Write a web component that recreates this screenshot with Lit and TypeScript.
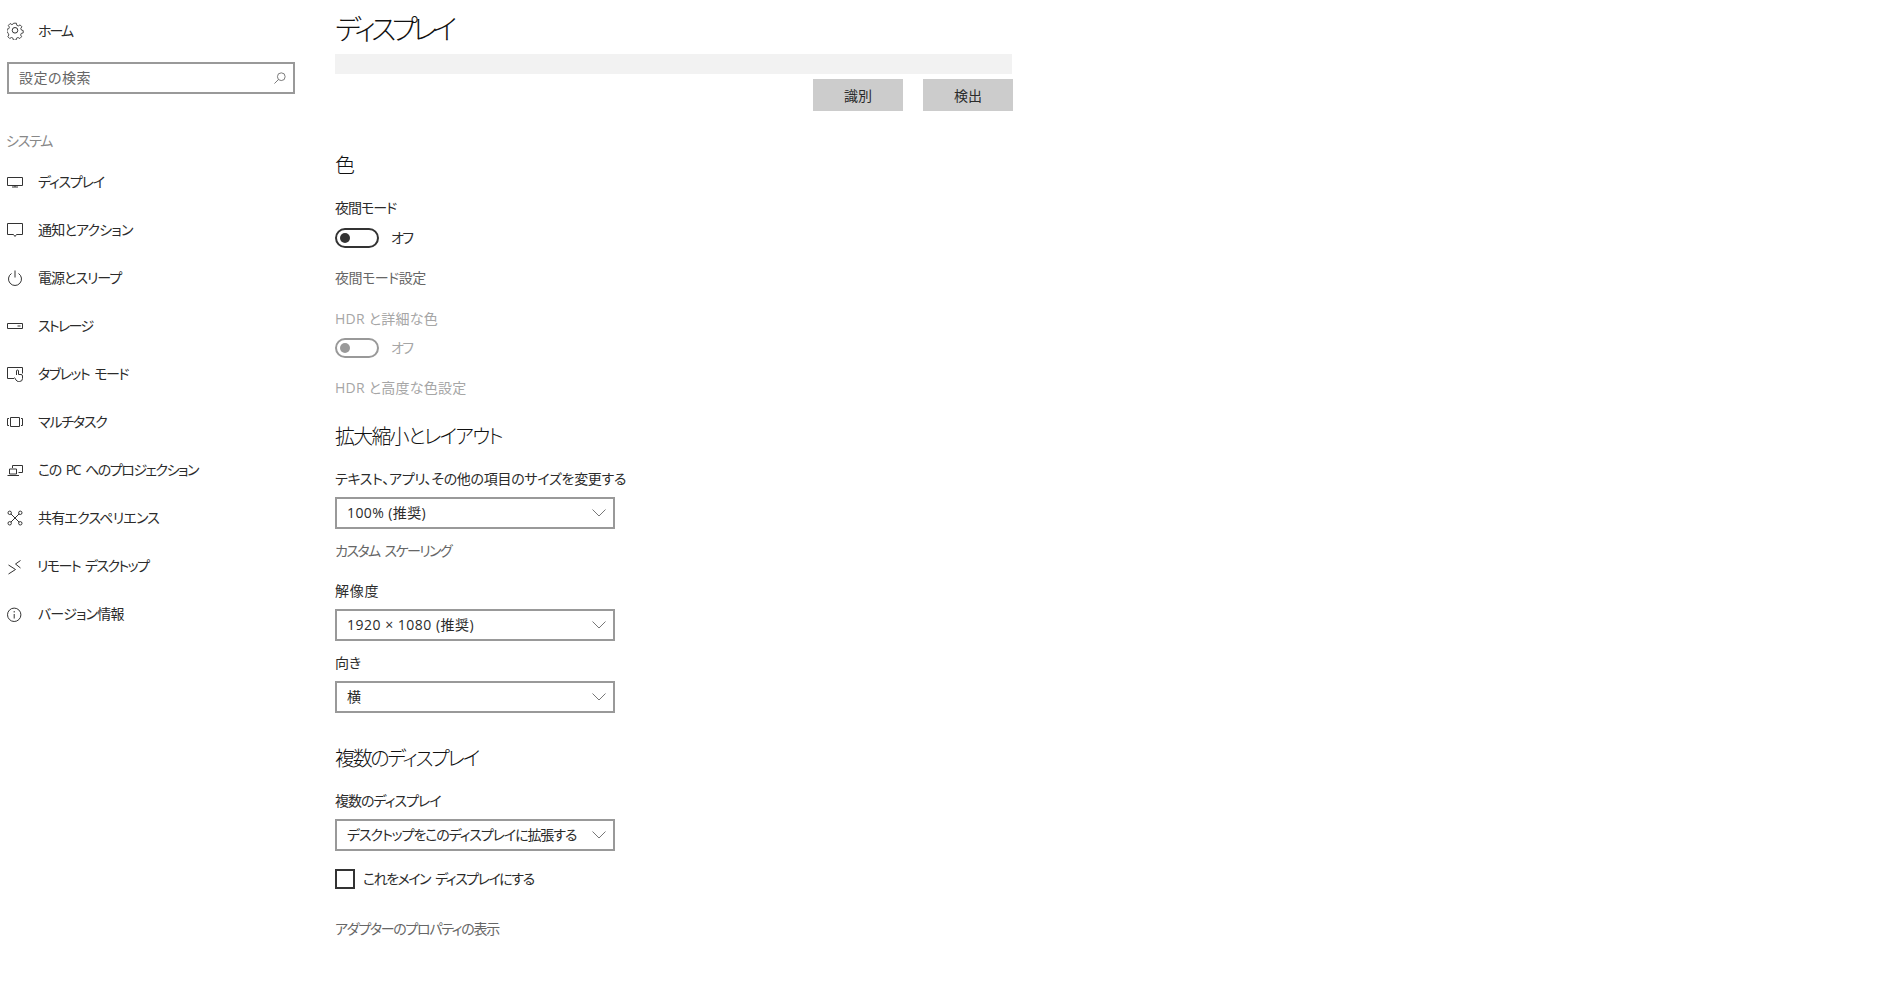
import { LitElement, html, css, svg } from "lit";
import { customElement } from "lit/decorators.js";

const ICONS: Record<string, unknown> = {
  display: svg`<path d="M.5 4.500h15v8h-15zM8 12.500v1.500M5 14h6"/>`,
  notify: svg`<path d="M.5 2.500h15v11h-6l-1.500 2-1.500-2h-6z"/>`,
  power: svg`<path d="M8 1.500v7M4.500 4.500a6.500 6.500 0 1 0 7 0"/>`,
  storage: svg`<path d="M.5 6.500h15v5h-15zM10.500 9h3"/>`,
  tablet: svg`<path d="M7 13.500H.5v-11h15v6M9.500 10V6a1 1 0 0 1 2 0v3.500H14a1.500 1.500 0 0 1 1.500 1.500v2.500a3 3 0 0 1-3 3h-1a3 3 0 0 1-2.500-1.500l-1.500-2.500"/>`,
  multi: svg`<path d="M3.500 4.500h9v9h-9zM2 5.500H.5v7H2M14 5.500h1.500v7H14"/>`,
  project: svg`<path d="M5.500 7V4.500h10v7h-4M2.500 8h7v5h-7zM.5 14.500H12"/>`,
  share: svg`<circle cx="2.700" cy="3.800" r="1.700"/><circle cx="13.300" cy="3.800" r="1.700"/><circle cx="2.700" cy="14.300" r="1.700"/><circle cx="13.300" cy="14.300" r="1.700"/><path d="M4 5l8 8M12 5l-8 8"/>`,
  remote: svg`<path d="M1.500 8l7 4.500-7 4.500M13.500 3.500l-5 3.500 5 4"/>`,
  info: svg`<circle cx="7.200" cy="9.800" r="6.700"/><path d="M7.200 9v4.500M7.200 6v1.500"/>`,
};

const ITEMS = [
  ["display", "ディスプレイ", "t-12"],
  ["notify", "通知とアクション", "t-08"],
  ["power", "電源とスリープ", "t-10"],
  ["storage", "ストレージ", "t-17"],
  ["tablet", "タブレット モード", "t-15 sp"],
  ["multi", "マルチタスク", "t-12"],
  ["project", "この PC へのプロジェクション", "t-15 sp"],
  ["share", "共有エクスペリエンス", "t-08"],
  ["remote", "リモート デスクトップ", "t-16 sp back"],
  ["info", "バージョン情報", "t-08"],
];

@customElement("app-root")
export class AppRoot extends LitElement {
  static styles = css`
    :host {
      display: flex;
      width: 1890px;
      height: 993px;
      overflow: hidden;
      background: #fff;
      color: #2b2b2b;
      font-family: "Open Sans", "Noto Sans CJK JP", sans-serif;
      font-size: 14px;
      font-feature-settings: "palt";
    }
    aside {
      width: 335px;
      flex: none;
      display: flex;
      flex-direction: column;
      padding: 7px 0 0 7px;
      box-sizing: border-box;
    }
    .nav {
      display: flex;
      align-items: center;
      gap: 13px;
      height: 48px;
      white-space: nowrap;
    }
    .nav span { margin-bottom: 2px; }
    .nav svg {
      width: 18px;
      height: 18px;
      flex: none;
      fill: none;
      stroke: #333;
      stroke-width: 1;
    }
    .search {
      width: 288px;
      height: 32px;
      margin-top: 7px;
      box-sizing: border-box;
      border: 2px solid #999;
      display: flex;
      align-items: center;
      justify-content: space-between;
      padding: 0 7px 0 10px;
      color: #666;
    }
    .search span { margin-bottom: 2px; }
    .search svg {
      width: 12px;
      height: 12px;
      fill: none;
      stroke: #666;
    }
    .group {
      height: 20px;
      line-height: 20px;
      margin: 37px 0 7px -1px;
      color: #888;
    }
    main {
      flex: 1;
      display: flex;
      flex-direction: column;
      align-items: flex-start;
      padding-top: 9px;
    }
    h1 {
      margin: 0;
      font-size: 28px;
      font-weight: 300;
      line-height: 40px;
      color: #111;
    }
    h2 {
      margin: 0;
      height: 28px;
      font-size: 20px;
      font-weight: 300;
      line-height: 26px;
      color: #111;
    }
    .bar {
      width: 677px;
      height: 20px;
      margin-top: 5px;
      background: #f2f2f2;
    }
    .buttons {
      width: 678px;
      display: flex;
      justify-content: flex-end;
      gap: 20px;
      margin-top: 5px;
    }
    .btn {
      width: 90px;
      height: 32px;
      background: #ccc;
      display: flex;
      align-items: center;
      justify-content: center;
    }
    .row {
      height: 20px;
      line-height: 18px;
      white-space: nowrap;
    }
    .link { color: #666; }
    .off { color: #a6a6a6; }
    .toggle-row {
      display: flex;
      align-items: center;
      gap: 12px;
      height: 20px;
    }
    .toggle-row span:last-child { margin-bottom: 2px; }
    .toggle {
      width: 44px;
      height: 20px;
      box-sizing: border-box;
      border: 2px solid #333;
      border-radius: 10px;
      display: flex;
      align-items: center;
      padding-left: 3px;
    }
    .toggle::before {
      content: "";
      width: 10px;
      height: 10px;
      border-radius: 50%;
      background: #333;
    }
    .toggle-row.off .toggle { border-color: #999; }
    .toggle-row.off .toggle::before { background: #999; }
    .select {
      width: 280px;
      height: 32px;
      box-sizing: border-box;
      border: 2px solid #999;
      display: flex;
      align-items: center;
      justify-content: space-between;
      padding: 0 7px 0 10px;
      white-space: nowrap;
    }
    .select span { margin-bottom: 2px; }
    .select svg {
      width: 14px;
      height: 8px;
      flex: none;
      fill: none;
      stroke: #777;
    }
    .check-row {
      display: flex;
      align-items: center;
      gap: 8px;
      height: 20px;
    }
    .check-row span:last-child { margin-bottom: 2px; }
    .box {
      width: 20px;
      height: 20px;
      box-sizing: border-box;
      border: 2px solid #333;
    }
    .m7 { margin-top: 7px; }
    .m8 { margin-top: 8px; }
    .m9 { margin-top: 9px; }
    .m13 { margin-top: 13px; }
    .m18 { margin-top: 18px; }
    .m20 { margin-top: 20px; }
    .m21 { margin-top: 21px; }
    .m25 { margin-top: 25px; }
    .m31 { margin-top: 31px; }
    .m33 { margin-top: 33px; }
    .m42 { margin-top: 42px; }
    .sp { word-spacing: 3px; }
    .back { margin-left: -1px; }
    .t-48 { letter-spacing: -4.8px; }
    .t-23 { letter-spacing: -2.3px; }
    .t-20 { letter-spacing: -2px; }
    .t-18 { letter-spacing: -1.8px; }
    .t-17 { letter-spacing: -1.7px; }
    .t-16 { letter-spacing: -1.6px; }
    .t-15 { letter-spacing: -1.5px; }
    .t-13 { letter-spacing: -1.3px; }
    .t-12 { letter-spacing: -1.2px; }
    .t-11 { letter-spacing: -1.1px; }
    .t-10 { letter-spacing: -1px; }
    .t-08 { letter-spacing: -0.8px; }
    .t-05 { letter-spacing: -0.5px; }
    .t-03 { letter-spacing: -0.3px; }
    .t02 { letter-spacing: 0.25px; }
    .t04 { letter-spacing: 0.4px; }
    .t05 { letter-spacing: 0.5px; }
    .t08 { letter-spacing: 0.8px; }
  `;

  private select(label: string, track = "") {
    return html`<div class="select m7">
      <span class=${track}>${label}</span>
      <svg viewBox="0 0 14 8"><path d="M.5 .5L7 7 13.500 .5" /></svg>
    </div>`;
  }

  render() {
    return html`
      <aside>
        <div class="nav">
          <svg viewBox="0 0 18 18">
            <circle cx="8" cy="8.300" r="2.800" />
            <path d="M7.500 1h3l.5 2.300 1.700.8 2-1.200 2 2.100-1.200 2 .7 1.700 2 .6v2.600l-2.200.6-.7 1.700 1.100 2-2 2-2-1.100-1.700.7-.5 2.200h-3l-.5-2.200-1.700-.7-2 1.100-2-2 1.100-2-.7-1.700L0 10.400V7.800l2-.6.700-1.700L1.500 3.500l2-2.100 2 1.200 1.500-.8z" transform="translate(0 .3) scale(.89)" />
          </svg>
          <span class="t-20">ホーム</span>
        </div>
        <div class="search">
          <span class="t05">設定の検索</span>
          <svg viewBox="0 0 14 14"><circle cx="8.500" cy="5.500" r="4.500" /><path d="M5.200 8.800L.5 13.500" /></svg>
        </div>
        <div class="group t-12">システム</div>
        ${ITEMS.map(
          ([icon, label, track]) => html`<div class="nav">
            <svg viewBox="0 0 18 18">${ICONS[icon]}</svg>
            <span class=${track}>${label}</span>
          </div>`
        )}
      </aside>
      <main>
        <h1 class="t-48">ディスプレイ</h1>
        <div class="bar"></div>
        <div class="buttons">
          <div class="btn">識別</div>
          <div class="btn">検出</div>
        </div>
        <h2 class="m42">色</h2>
        <div class="row m18 t-10">夜間モード</div>
        <div class="toggle-row m9"><span class="toggle"></span><span class="t-15">オフ</span></div>
        <div class="row link m21 t-05">夜間モード設定</div>
        <div class="row off m21 t02">HDR と詳細な色</div>
        <div class="toggle-row off m8"><span class="toggle"></span><span class="t-15">オフ</span></div>
        <div class="row off m21 t02">HDR と高度な色設定</div>
        <h2 class="m25 t-18">拡大縮小とレイアウト</h2>
        <div class="row m18 t-03">テキスト、アプリ、その他の項目のサイズを変更する</div>
        ${this.select("100% (推奨)", "t04")}
        <div class="row link m13 t-16 sp">カスタム スケーリング</div>
        <div class="row m20 t08">解像度</div>
        ${this.select("1920 × 1080 (推奨)", "t05")}
        <div class="row m13">向き</div>
        ${this.select("横")}
        <h2 class="m33 t-23">複数のディスプレイ</h2>
        <div class="row m18 t-10">複数のディスプレイ</div>
        ${this.select("デスクトップをこのディスプレイに拡張する", "t-11")}
        <div class="check-row m18"><span class="box"></span><span class="t-15 sp">これをメイン ディスプレイにする</span></div>
        <div class="row link m31 t-13">アダプターのプロパティの表示</div>
      </main>
    `;
  }
}
